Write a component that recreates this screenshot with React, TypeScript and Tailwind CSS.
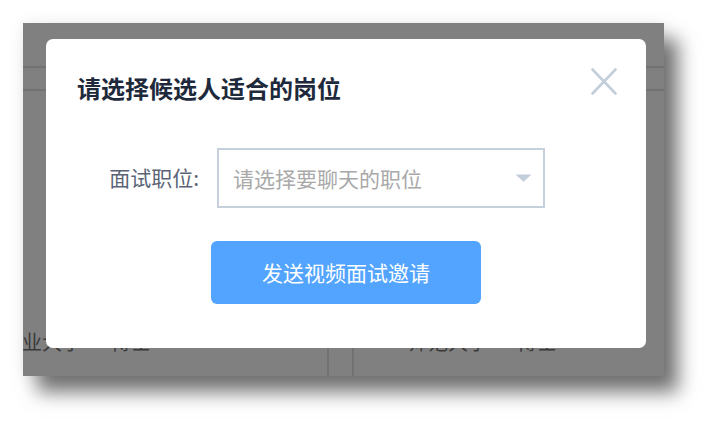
const font = { fontFamily: '"Noto Sans CJK SC", "Noto Sans", sans-serif' };

const BackgroundTable = () => (
  <div className="flex h-full flex-col text-[20px] text-[#3a3a3a]">
    <div className="h-[43px]" />
    <div className="h-[2px] bg-[#727272]" />
    <div className="h-[21px]" />
    <div className="h-[2px] bg-[#727272]" />
    <div className="flex flex-1">
      <div className="flex w-[304px] items-end pb-[22px]">
        <span className="-ml-[1px] whitespace-nowrap leading-[24px]">业大学 · 博士</span>
      </div>
      <div className="w-[2px] bg-[#727272]" />
      <div className="w-[23px]" />
      <div className="w-[2px] bg-[#727272]" />
      <div className="flex flex-1 items-end pb-[22px] pl-[54px]">
        <span className="whitespace-nowrap leading-[24px]">师范大学 · 博士</span>
      </div>
    </div>
  </div>
);

const CloseIcon = () => (
  <svg width="26" height="27" viewBox="0 0 26 27" fill="none" stroke="#c3cedb" strokeWidth="2.6" strokeLinecap="round">
    <path d="M1.5 1.5 L24.5 25.5" />
    <path d="M24.5 1.5 L1.5 25.5" />
  </svg>
);

const Modal = () => (
  <div className="absolute left-[23px] top-[16px] flex w-[600px] flex-col rounded-[7px] bg-white pb-[44px]">
    <div className="flex items-start justify-between pl-[31px] pr-[29px] pt-[29px]">
      <h2 className="mt-[8px] text-[24px] font-bold leading-[24px] text-[#1e2a3b]">请选择候选人适合的岗位</h2>
      <button>
        <CloseIcon />
      </button>
    </div>

    <div className="mt-[48px] flex items-center">
      <label className="w-[153px] pb-[3px] text-right text-[21px] leading-[24px] text-[#5b6477]">面试职位:</label>
      <div className="ml-[18px] flex h-[60px] w-[328px] items-center justify-between border-2 border-[#c5d0dc] pl-[14px] pr-[11px]">
        <span className="text-[21px] leading-[24px] text-[#a9a9a9]">请选择要聊天的职位</span>
        <svg width="17" height="8" viewBox="0 0 17 8">
          <path d="M0.5 0.5 H16.5 L9.2 7.3 Q8.5 7.9 7.8 7.3 Z" fill="#c3cedb" />
        </svg>
      </div>
    </div>

    <div className="mt-[33px] flex justify-center">
      <button className="h-[63px] w-[270px] rounded-[6px] bg-[#52a4ff] text-[21px] text-white">
        发送视频面试邀请
      </button>
    </div>
  </div>
);

export default function App() {
  return (
    <div className="h-[431px] w-[719px] bg-white p-[23px]" style={font}>
      <div className="relative h-[353px] w-[641px] overflow-hidden bg-[#808080] shadow-[14px_16px_18px_rgba(0,0,0,0.55),0_0_14px_rgba(0,0,0,0.07)]">
        <BackgroundTable />
        <Modal />
      </div>
    </div>
  );
}
